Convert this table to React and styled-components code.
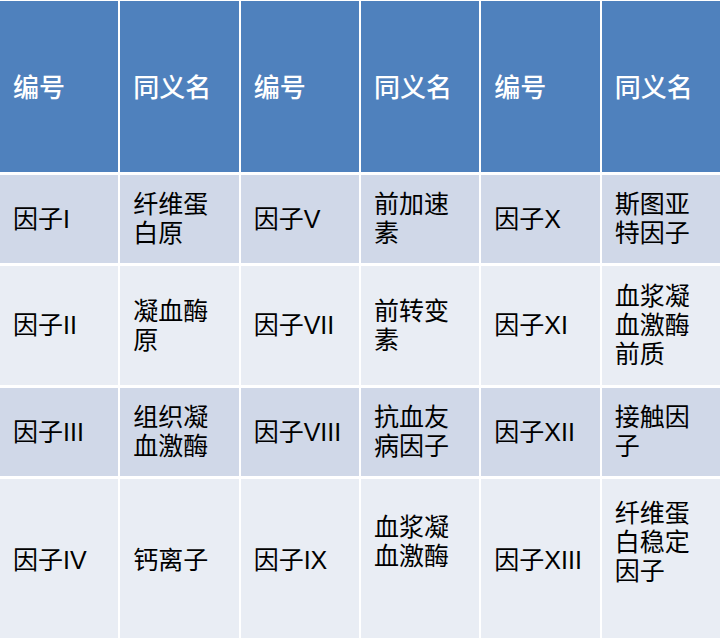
import React from "react";
import styled, { createGlobalStyle } from "styled-components";

const rows = [
  { cells: ["因子I", "纤维蛋白原", "因子V", "前加速素", "因子X", "斯图亚特因子"] },
  { cells: ["因子II", "凝血酶原", "因子VII", "前转变素", "因子XI", "血浆凝血激酶前质"] },
  { cells: ["因子III", "组织凝血激酶", "因子VIII", "抗血友病因子", "因子XII", "接触因子"] },
  {
    cells: ["因子IV", "钙离子", "因子IX", "血浆凝血激酶", "因子XIII", "纤维蛋白稳定因子"],
    lifted: [3, 5],
  },
];

const App = () => {
  return (
    <>
      <GlobalStyle />
      <Table>
        {["编号", "同义名", "编号", "同义名", "编号", "同义名"].map((h, i) => (
          <HeadCell key={i}>{h}</HeadCell>
        ))}
        {rows.map((row, r) =>
          row.cells.map((c, i) => (
            <Cell key={r + "-" + i} $odd={r % 2 === 0} $lift={row.lifted && row.lifted.includes(i)}>
              <CellText>{c}</CellText>
            </Cell>
          ))
        )}
      </Table>
    </>
  );
};

export default App;

const GlobalStyle = createGlobalStyle`
  body {
    margin: 0;
    background: #ffffff;
    font-family: "Liberation Sans", "Noto Sans CJK SC", sans-serif;
  }
`;
const Table = styled.div`
  width: 720px;
  height: 640px;
  padding: 1px 0 0 0;
  display: grid;
  grid-template-columns: repeat(6, 1fr);
  grid-template-rows: 171px 88px 119px 88px 1fr;
  column-gap: 2px;
  row-gap: 3px;
  overflow: hidden;
`;
const HeadCell = styled.div`
  background: #4f81bd;
  color: #ffffff;
  font-size: 26px;
  font-weight: 500;
  display: flex;
  align-items: center;
  padding: 0 12px 2px 13px;
  font-family: "Liberation Sans", "Noto Sans CJK SC", sans-serif;
`;
const Cell = styled.div`
  background: ${(p) => (p.$odd ? "#d0d8e8" : "#e9edf4")};
  display: flex;
  align-items: center;
  padding: 0 12px ${(p) => (p.$lift ? "36px" : "0")} 13px;
  color: #000000;
`;
const CellText = styled.div`
  font-size: 25px;
  line-height: 29px;
  font-family: "Liberation Sans", "Noto Sans CJK SC", sans-serif;
  word-break: break-all;
`;
